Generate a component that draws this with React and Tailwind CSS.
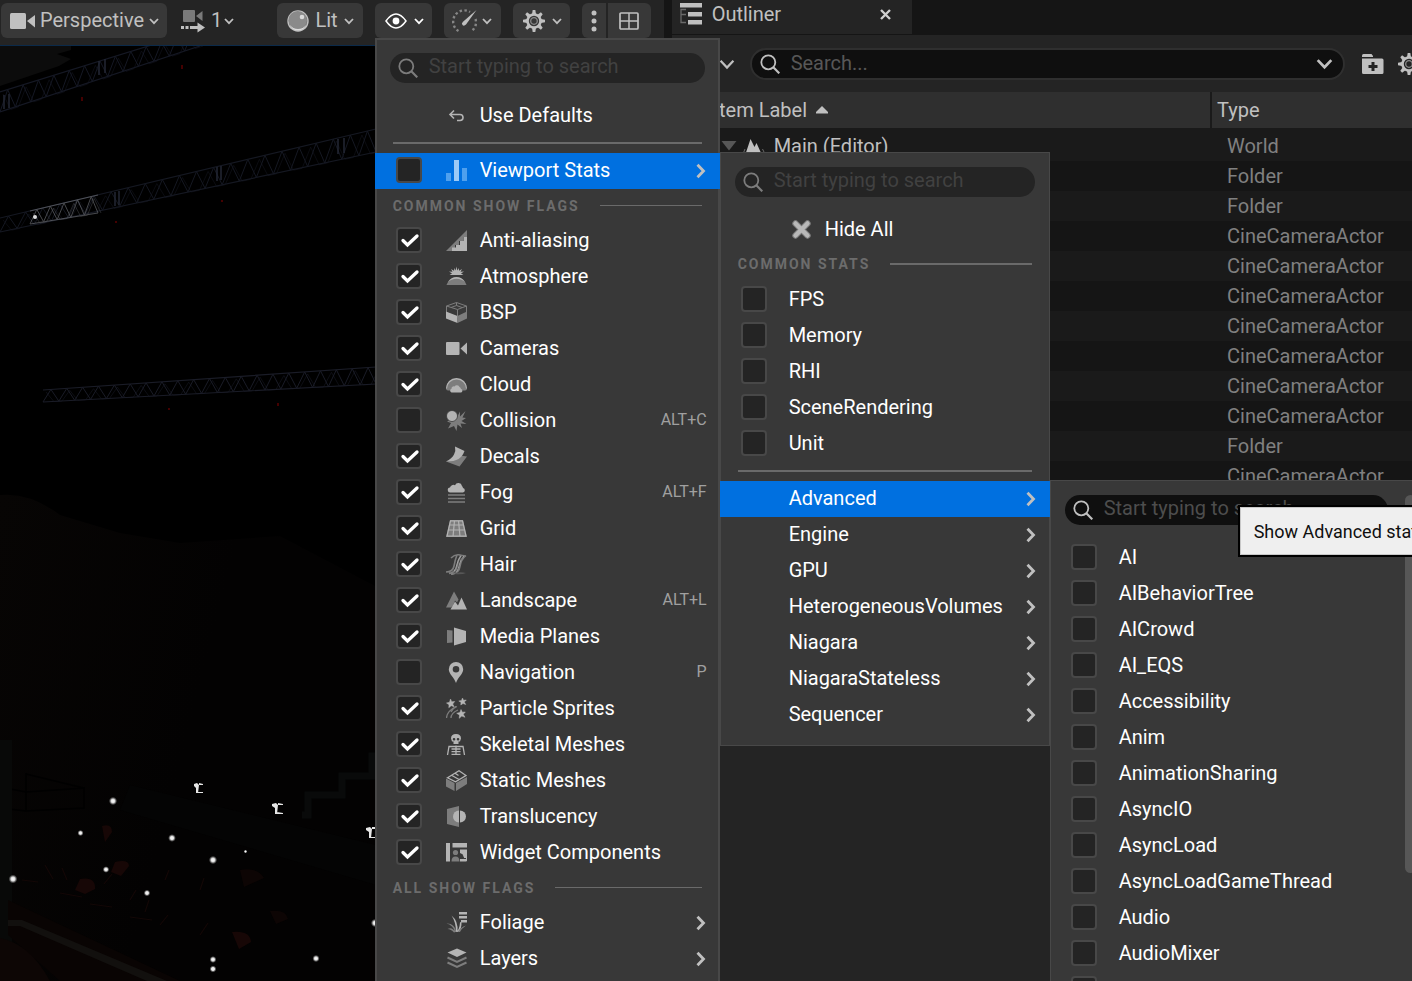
import React from "react";

const L = "#b4b4b4";
const D = "#7d7d7d";

function Icon({ size = 21, children, className = "" }) {
  return (
    <svg width={size} height={size} viewBox="0 0 21 21" className={"shrink-0 " + className} aria-hidden="true">
      {children}
    </svg>
  );
}

const icons = {
  defaults: (
    <Icon>
      <path d="M8 5.500 4 9.500l4 4M4.500 9.500H14a3 3 0 0 1 0 6h-3" fill="none" stroke={L} strokeWidth="1.600" />
    </Icon>
  ),
  stats: (
    <Icon>
      <path d="M0 13h5v8H0zM16 8h5v13h-5z" fill="#4fa0ee" />
      <path d="M8 0h5v21H8z" fill="#9ccaf7" />
    </Icon>
  ),
  antiAliasing: (
    <Icon>
      <path d="M0 21 21 0v7h-4v4h-4v4H9v3H6v3z" fill={D} />
      <path d="M21 7v14H6v-3.500h4V15h4v-4h3.500V7z" fill={L} />
    </Icon>
  ),
  atmosphere: (
    <Icon>
      <path d="M3.500 9 6 7.500 3 5.500l3.500.3L5 3l3 1.800L8.500 2l1.200 2.500L10.500.5l.8 4L12.800 2l.2 2.800L16 3l-1.500 2.800 3.500-.3L15 7.500 17.500 9z" fill={L} />
      <path d="M.5 19C2 14.500 6 12 10.500 12s8.500 2.500 10 7z" fill={D} />
      <path d="M1.500 16.500C4 12.500 7 11 10.500 11s6.500 1.500 9 5.500C17 14 14 12.800 10.500 12.800S4 14 1.500 16.500z" fill={L} />
    </Icon>
  ),
  bsp: (
    <Icon>
      <path d="m.5 4 10-3.500 10 3.500v7l-9 4-11-4z" fill="#3a3a3a" stroke={D} />
      <path d="m.5 4 11 3.500 9-3.500M11.500 7.500V14M10.500.5v3L5 5.500M10.500 3.500 16 5.500" fill="none" stroke={D} />
      <path d="M0 9.500 11.500 14v7L0 16.500z" fill={L} />
      <path d="M21 9.500 11.500 14v7L21 16.500z" fill={D} />
    </Icon>
  ),
  cameras: (
    <Icon>
      <rect x="0" y="4" width="13.500" height="13" rx="1" fill={L} />
      <path d="M21 4.500v12l-6.500-6z" fill={L} />
    </Icon>
  ),
  cloud: (
    <Icon>
      <path d="M0 14.500a10.500 10 0 0 1 21 0q0 2-2 2H2q-2 0-2-2z" fill={D} />
      <path d="M0 14.500a10.500 10.500 0 0 1 21 0h-1a9.500 9 0 0 0-19 0z" fill={L} />
      <path d="M5.500 18.500a2 2 0 0 1 0-3.800 2.200 2.200 0 0 1 3-2.200 2.800 2.800 0 0 1 5 .5 2.500 2.500 0 0 1 1.500 2 1.800 1.800 0 0 1 0 3.500z" fill={L} />
    </Icon>
  ),
  collision: (
    <Icon>
      <path d="m11 7 3-5.500 0 5L19.500 1 16.500 7.500l3.500.5-4.500 3 5 3-6-.5 1.500 4.500-4.500-3.500-1 6.500-2.500-5L2 18.500 5 13l-4-1.500z" fill={D} />
      <circle cx="6" cy="6" r="5.500" fill={L} stroke="#383838" strokeWidth=".8" />
    </Icon>
  ),
  decals: (
    <Icon>
      <path d="M0 15.500 8 14q5-2 6.500-4.500l6.500 1-7.500 10z" fill={D} />
      <path d="M9 .5 18.500 5q-2 5.500-6 8T0 15.500q6-3 8-7t1-8z" fill={L} />
    </Icon>
  ),
  fog: (
    <Icon>
      <path d="M4.500 10.500a2.500 2.500 0 0 1-.5-5 3.400 3.400 0 0 1 5-2.200 3.700 3.700 0 0 1 7 .7 3 3 0 0 1 1 2 2.300 2.300 0 0 1 0 4.500z" fill={L} />
      <path d="M2 13h17M2 16.500h17M2 20h17" stroke={D} strokeWidth="1.600" />
    </Icon>
  ),
  grid: (
    <Icon>
      <path d="M4 2h13l4 17H0z" fill={D} />
      <path d="M4.500 2.800h12L20 18.200H1zM3.500 7h14M2.500 12h16.500M8.500 2.500l-1.500 16M12.500 2.500l1.500 16" fill="none" stroke={L} strokeWidth="1.200" />
    </Icon>
  ),
  hair: (
    <Icon>
      <path d="M0 18q7 0 8-6T11 1M3 19.500q7-1 8-7T15 1M5 20.500q8-1 9-8T20 1.500M5 4Q9 0 14 1t6 1" fill="none" stroke={D} strokeWidth="1.600" />
      <path d="M8 17q2-2 3-7t4-8M10.500 18q2-3 3-8t4.500-8" fill="none" stroke={L} strokeWidth=".8" />
      <path d="M8 20q5-3 12-1-4 2-12 1z" fill="#575757" />
    </Icon>
  ),
  landscape: (
    <Icon>
      <path d="m0 17.500 8-16 4.500 8-1.500 3-2-2-2 5-2 2z" fill={D} />
      <path d="m4.500 19.500 4.500-8 3 4 3.500-8 5.500 12z" fill={L} />
    </Icon>
  ),
  media: (
    <Icon>
      <path d="m1 4 5.500.5v12L1 17z" fill={D} />
      <path d="m8 1.500 12 3.500v11L8 19.500z" fill={L} />
    </Icon>
  ),
  navigation: (
    <Icon>
      <path fillRule="evenodd" d="M10 0a7.200 7.200 0 0 1 7.200 7.200C17.200 12 12 15 10 21 8 15 2.800 12 2.800 7.200A7.200 7.200 0 0 1 10 0zm0 4a3.300 3.300 0 1 0 0 6.600A3.300 3.300 0 0 0 10 4z" fill={L} />
    </Icon>
  ),
  particles: (
    <Icon>
      <path d="m4.500 1 1.200 2.800 3-.3-2 2.500 1.500 2.700-3-1-2.400 2 .2-3L.5 5l3-.8zM16.500 0l1 2.300 2.800-.3-2 2 1.400 2.500-2.700-1L14.800 7l.2-2.700L12.800 3l2.700-.6zM15 11.500l1.300 2.700 3-.2-2 2.300 1.700 3-3.200-1.200-2.600 2.200.3-3.300-2.800-1.700 3.200-.8z" fill={L} stroke={L} strokeWidth=".5" />
      <path d="M.5 20Q1 13 10 8.500M5 20q0-5 7-8M5 14q2-4 6-5.500" fill="none" stroke={D} strokeWidth="1.300" />
    </Icon>
  ),
  skeletal: (
    <Icon>
      <path fillRule="evenodd" d="M10 0q5 0 5 4.500L14 7.500h-1.500V10h-5V7.500H6L5 4.500Q5 0 10 0zM8 4a1.300 1.300 0 1 0 .1 2.600A1.300 1.300 0 0 0 8 4zm4 0a1.300 1.300 0 1 0 .1 2.600A1.300 1.300 0 0 0 12 4z" fill={L} />
      <path d="M1.500 21 3 12.500h14l1.500 8.500M10 11.500V21M5.500 15h9M5.500 17.700h9M5.500 20.300h9" fill="none" stroke={L} strokeWidth="1.300" />
    </Icon>
  ),
  staticMesh: (
    <Icon>
      <path d="M0 8.500 8.500 13v8L0 16.500z" fill={D} />
      <path d="M10 13 21 7v7l-11 7z" fill={D} />
      <path d="M1.500 7.800 13 .8l7 4.700-10.500 6.300zM5.500 5.200 13 9.500M9 3.200l3.500 2.300" fill="none" stroke={L} strokeWidth="1.300" />
    </Icon>
  ),
  translucency: (
    <Icon>
      <path d="M1 3 13 0v21L1 18z" fill={D} />
      <path d="M13 4.500a6 6 0 0 0 0 12z" fill={L} />
      <path d="M14 4.500a6 6 0 0 1 0 12z" fill={L} />
    </Icon>
  ),
  widgets: (
    <Icon>
      <path d="M0 1h4v18.500H0zM6.500 1H21v4.500H6.500zM14 7.500h7V19h-2l-3-7-2-1z" fill={L} />
      <path d="M14 12.500q3-1 3 2t3 2M14 18.500h6" fill="none" stroke="#383838" strokeWidth="1" />
      <path d="M14 17h6.500v2.500H14z" fill={L} />
      <circle cx="9.500" cy="10.500" r="2.600" fill={D} />
      <path d="M5.500 19.500q0-5 4-5t4 5z" fill={D} />
    </Icon>
  ),
  foliage: (
    <Icon>
      <path d="M13 0h8v2.500h-8zM13 4h8v2.500h-8zM15 8h6v2.500h-6z" fill={L} />
      <path d="M10 20Q10 10 5.500 3.500 12.500 9 11.500 20zM10 20Q13.500 18 14 10.500l1.500-1q.5 8.500-4 10.500z" fill={L} />
      <path d="M9 20Q7 13 .5 11.500 8.500 11 10.500 20zM8 20.500q-3-3.500-6.500-3.500Q6 14.500 9.500 20zM11.500 20q3-5 8.500-6.500-4.500 3-6 6.500z" fill={D} />
    </Icon>
  ),
  layers: (
    <Icon>
      <path d="m1.500 4.500 9.500-4 9.500 4-9.500 4.500z" fill={L} />
      <path d="m1.500 9.500 9.500 4.500 9.500-4.500M1.500 14.500l9.500 4.500 9.500-4.500" fill="none" stroke={D} strokeWidth="2" />
    </Icon>
  ),
  hideAll: (
    <Icon>
      <path d="m4.500 4.500 12 12m0-12-12 12" stroke="#777" strokeWidth="6.500" strokeLinecap="round" />
      <path d="m4.500 4.500 12 12m0-12-12 12" stroke="#b8b8b8" strokeWidth="4.500" strokeLinecap="round" />
    </Icon>
  ),
};

function Gear({ color = "#c0c0c0" }) {
  return (
    <svg width="22" height="22" viewBox="-11 -11 22 22" className="shrink-0" aria-hidden="true">
      {[0, 45, 90, 135, 180, 225, 270, 315].map((a) => (
        <path key={a} d="M-2-7-1.300-11h2.600L2-7z" fill={color} transform={`rotate(${a})`} />
      ))}
      <circle r="6.500" fill="none" stroke={color} strokeWidth="2.600" />
      <circle r="3.300" fill="none" stroke="#8a8a8a" strokeWidth="1.300" />
    </svg>
  );
}

function Chevron({ color = "#c0c0c0", size = 10, weight = 1.8 }) {
  return (
    <svg width={size} height={size} viewBox="0 0 10 10" className="shrink-0" aria-hidden="true">
      <path d="m1 3 4 4.200L9 3" fill="none" stroke={color} strokeWidth={weight} />
    </svg>
  );
}

function Arrow() {
  return (
    <svg width="10" height="16" viewBox="0 0 10 16" className="shrink-0" aria-hidden="true">
      <path d="m1.500 1.800 6 6.200-6 6.200" fill="none" stroke="#c0c0c0" strokeWidth="2.800" />
    </svg>
  );
}

function Magnifier({ color }) {
  return (
    <svg width="20" height="20" viewBox="0 0 20 20" className="shrink-0" aria-hidden="true">
      <circle cx="8.300" cy="8.300" r="7" fill="none" stroke={color} strokeWidth="1.800" />
      <path d="m13.300 13.300 6 6" stroke={color} strokeWidth="2.200" />
    </svg>
  );
}

function Check({ label, on }) {
  return (
    <span className="relative grid h-[26px] w-[26px] shrink-0 place-items-center">
      <input
        type="checkbox"
        aria-label={label}
        defaultChecked={on}
        className="peer h-[26px] w-[26px] appearance-none rounded-[4px] border-2 border-[#484848] bg-[#242424]"
      />
      <svg viewBox="0 0 26 26" className="pointer-events-none absolute inset-0 hidden peer-checked:block" aria-hidden="true">
        <path d="m7 13.500 4.500 4.500L21 9" fill="none" stroke="#fff" strokeWidth="3.300" strokeLinecap="round" />
      </svg>
    </span>
  );
}

function CheckRow({ label, icon, on, shortcut }) {
  return (
    <label className="flex h-9 items-center pr-[13px] pb-0.5 pl-[21px]">
      <Check label={label} on={on} />
      {icon ? <span className="mr-[13px] ml-6">{icon}</span> : <span className="w-[22px]" />}
      <span>{label}</span>
      {shortcut && <span className="ml-auto text-base text-[#a0a0a0]">{shortcut}</span>}
    </label>
  );
}

function ActionRow({ label, icon }) {
  return (
    <button type="button" className="flex h-9 w-full items-center gap-[13px] pb-0.5 pl-[71px] text-left">
      {icon}
      {label}
    </button>
  );
}

function SubRow({ label, icon, active }) {
  return (
    <button type="button" className={"flex h-9 w-full items-center justify-between pr-[14px] text-left " + (icon ? "pl-[71px] " : "pl-[69px] ") + (active ? "bg-[#0070e0]" : "")}>
      <span className="flex items-center gap-[13px] pb-0.5">
        {icon}
        {label}
      </span>
      <Arrow />
    </button>
  );
}

function MenuSearch({ lit }) {
  return (
    <label className={"mx-[15px] mb-[15px] flex h-[30px] items-center gap-[11px] rounded-full pr-3 pl-2 " + (lit ? "bg-[#0f0f0f]" : "bg-[#242424]")}>
      <Magnifier color={lit ? "#c0c0c0" : "#7c7c7c"} />
      <input
        type="text"
        aria-label="Start typing to search"
        placeholder="Start typing to search"
        className={"w-full min-w-0 bg-transparent pb-1 outline-none " + (lit ? "placeholder:text-[#4d4d4d]" : "placeholder:text-[#414141]")}
      />
    </label>
  );
}

function Heading({ children, thick }) {
  return (
    <div className={"flex h-[34px] items-center gap-5 px-[18px] " + (thick ? "pb-0.5" : "pb-px")}>
      <h2 className="text-sm font-bold tracking-[2px] whitespace-nowrap text-[#6c6c6c]">{children}</h2>
      <span className={"flex-1 bg-[#6a6a6a] " + (thick ? "h-0.5" : "h-px")} />
    </div>
  );
}

function Separator() {
  return (
    <div className="flex h-[19px] items-center px-[18px] pb-px">
      <hr className="h-0.5 w-full border-0 bg-[#6a6a6a]" />
    </div>
  );
}

const flags = [
  ["Anti-aliasing", "antiAliasing", true],
  ["Atmosphere", "atmosphere", true],
  ["BSP", "bsp", true],
  ["Cameras", "cameras", true],
  ["Cloud", "cloud", true],
  ["Collision", "collision", false, "ALT+C"],
  ["Decals", "decals", true],
  ["Fog", "fog", true, "ALT+F"],
  ["Grid", "grid", true],
  ["Hair", "hair", true],
  ["Landscape", "landscape", true, "ALT+L"],
  ["Media Planes", "media", true],
  ["Navigation", "navigation", false, "P"],
  ["Particle Sprites", "particles", true],
  ["Skeletal Meshes", "skeletal", true],
  ["Static Meshes", "staticMesh", true],
  ["Translucency", "translucency", true],
  ["Widget Components", "widgets", true],
];
const commonStats = ["FPS", "Memory", "RHI", "SceneRendering", "Unit"];
const groups = ["Engine", "GPU", "HeterogeneousVolumes", "Niagara", "NiagaraStateless", "Sequencer"];
const advanced = [
  "AI", "AIBehaviorTree", "AICrowd", "AI_EQS", "Accessibility", "Anim", "AnimationSharing",
  "AsyncIO", "AsyncLoad", "AsyncLoadGameThread", "Audio", "AudioMixer", "AudioThreadCommands",
];

function AdvancedMenu() {
  return (
    <div className="absolute -top-px left-full w-[366px] bg-[#383838] pt-[15px] shadow-[inset_0_0_0_1px_#484848]">
      <div className="flex gap-0.5">
        <div className="w-[353px]">
          <MenuSearch lit />
          {advanced.map((a) => (
            <CheckRow key={a} label={a} />
          ))}
        </div>
        <div className="h-[378px] w-[11px] rounded-md bg-[#575757]" />
      </div>
      <div role="tooltip" className="absolute top-[25px] left-[188px] border-2 border-black bg-[#efefef] px-3.5 pt-[13px] pb-[11px] text-lg leading-6 whitespace-nowrap text-[#0f0f0f] shadow-[inset_0_0_0_1px_#c8c8c8]">
        Show Advanced stats
      </div>
    </div>
  );
}

function StatsMenu() {
  return (
    <div className="absolute -top-px left-full w-[330px] bg-[#383838] pt-[15px] pb-[13px] shadow-[inset_0_0_0_1px_#484848]">
      <MenuSearch />
      <ActionRow label="Hide All" icon={icons.hideAll} />
      <Heading thick>COMMON STATS</Heading>
      {commonStats.map((s) => (
        <CheckRow key={s} label={s} />
      ))}
      <Separator />
      <div className="relative">
        <SubRow label="Advanced" active />
        <AdvancedMenu />
      </div>
      {groups.map((g) => (
        <SubRow key={g} label={g} />
      ))}
    </div>
  );
}

function ShowMenu() {
  return (
    <div className="absolute top-full left-0 w-[345px] bg-[#383838] pt-[15px] pb-9 text-white shadow-[inset_0_0_0_2px_#484848]">
      <MenuSearch />
      <ActionRow label="Use Defaults" icon={icons.defaults} />
      <Separator />
      <div className="relative">
        <div className="flex h-9 items-center bg-[#0070e0] pr-[14px] pl-[21px]">
          <span className="pb-0.5">
            <Check label="Viewport Stats" />
          </span>
          <button type="button" className="ml-6 flex h-9 flex-1 items-center justify-between text-left">
            <span className="flex items-center gap-[13px] pb-0.5">
              {icons.stats}
              Viewport Stats
            </span>
            <Arrow />
          </button>
        </div>
        <StatsMenu />
      </div>
      <Heading>COMMON SHOW FLAGS</Heading>
      {flags.map(([label, icon, on, shortcut]) => (
        <CheckRow key={label} label={label} icon={icons[icon]} on={on} shortcut={shortcut} />
      ))}
      <Heading>ALL SHOW FLAGS</Heading>
      <SubRow label="Foliage" icon={icons.foliage} />
      <SubRow label="Layers" icon={icons.layers} />
    </div>
  );
}

const tool = "flex h-[35px] items-center bg-[#383838] text-[#c0c0c0] ";

function Toolbar() {
  return (
    <div className="relative z-10 flex h-[46px] items-start border-b border-[#0b2a4a] bg-[#242424] pt-[3px] pr-[13px] pl-px">
      <button type="button" className={tool + "gap-[5px] rounded-md pr-2 pl-[9px]"}>
        <svg width="25" height="16" viewBox="0 0 25 16" className="shrink-0" aria-hidden="true">
          <rect width="16" height="16" rx="1.500" fill="#c0c0c0" />
          <path d="M25 2v12.500L17 8z" fill="#c0c0c0" />
        </svg>
        <span className="pb-0.5">Perspective</span>
        <Chevron />
      </button>
      <button type="button" aria-label="Camera speed 1" className="ml-[14px] flex h-[35px] items-center text-[#c0c0c0]">
        <svg width="25" height="24" viewBox="0 0 25 24" className="mr-[5px] shrink-0" aria-hidden="true">
          <rect x="2" y="1" width="12" height="12" rx="1" fill="#7a7a7a" />
          <path d="M21.500 2v10L15 7z" fill="#7a7a7a" />
          <path d="M0 18.500h3M4.500 18.500h3M9 18.500h9" stroke="#c0c0c0" strokeWidth="3" />
          <path d="m16.500 13.500 7.500 5-7.500 5z" fill="#c0c0c0" />
        </svg>
        <span className="mr-0.5 pb-0.5">1</span>
        <Chevron />
      </button>
      <div className="ml-auto flex gap-3">
        <button type="button" className={tool + "gap-1.5 rounded-md pr-[9px] pl-2.5"}>
          <svg width="22" height="22" viewBox="0 0 22 22" className="shrink-0" aria-hidden="true">
            <circle cx="11" cy="11" r="10.700" fill="#c0c0c0" />
            <circle cx="11" cy="11" r="9.300" fill="#6f6f6f" />
            <circle cx="10.700" cy="10.200" r="9.200" fill="#8a8a8a" />
            <path d="M2.500 14.500Q6 19 11 19t8.500-4.500Q17 20.500 11 20.500T2.500 14.500z" fill="#dcdcdc" />
            <circle cx="15" cy="7" r="2.300" fill="#d8d8d8" />
          </svg>
          <span className="pb-0.5">Lit</span>
          <Chevron />
        </button>
        <div className="relative">
          <button type="button" aria-label="Show flags" className={tool + "w-[57px] gap-[7px] rounded-md pl-2.5"}>
            <svg width="22" height="16" viewBox="0 0 22 16" className="shrink-0" aria-hidden="true">
              <path d="M1 8q10-14 20 0-10 14-20 0z" fill="none" stroke="#fff" strokeWidth="1.500" />
              <circle cx="11" cy="8" r="3.400" fill="#fff" />
            </svg>
            <Chevron color="#fff" />
          </button>
          <ShowMenu />
        </div>
        <button type="button" aria-label="Performance" className={tool + "w-[57px] gap-[5px] rounded-md pl-2"}>
          <svg width="25" height="24" viewBox="0 0 25 24" className="shrink-0" aria-hidden="true">
            <path d="M6.500 22A10.500 10.500 0 1 1 18 3" fill="none" stroke="#868686" strokeWidth="2.400" strokeDasharray="2.400 2.400" />
            <path d="M23.500 10a10.500 10.500 0 0 1-4 12" fill="none" stroke="#868686" strokeWidth="2.400" strokeDasharray="2.400 2.400" />
            <path d="M24.500 1 14 15.500q-2 2-3.500.5t.5-3.300z" fill="#c0c0c0" />
          </svg>
          <Chevron />
        </button>
        <button type="button" aria-label="Settings" className={tool + "w-[57px] gap-[7px] rounded-md pl-2.5"}>
          <Gear />
          <Chevron />
        </button>
        <div className="flex gap-0.5">
          <button type="button" aria-label="More" className={tool + "w-6 justify-center rounded-l-md"}>
            <svg width="6" height="22" viewBox="0 0 6 22" aria-hidden="true">
              <circle cx="3" cy="3" r="2.500" fill="#c0c0c0" />
              <circle cx="3" cy="11" r="2.500" fill="#c0c0c0" />
              <circle cx="3" cy="19" r="2.500" fill="#c0c0c0" />
            </svg>
          </button>
          <button type="button" aria-label="Viewport layout" className={tool + "w-[43px] justify-center rounded-r-md"}>
            <svg width="20" height="18" viewBox="0 0 20 18" aria-hidden="true">
              <rect x="1" y="1" width="18" height="16" rx="1" fill="none" stroke="#c0c0c0" strokeWidth="1.700" />
              <path d="M10 1v16M1 9h18" stroke="#c0c0c0" strokeWidth="1.500" />
            </svg>
          </button>
        </div>
      </div>
    </div>
  );
}

function Truss({ from, to, parts, color, opacity = 1 }) {
  const [x1, t1, b1] = from;
  const [x2, t2, b2] = to;
  const at = (i) => {
    const f = i / parts;
    return [x1 + (x2 - x1) * f, t1 + (t2 - t1) * f, b1 + (b2 - b1) * f];
  };
  let zig = "";
  let zag = "";
  for (let i = 0; i <= parts; i++) {
    const [x, t, b] = at(i);
    zig += `${i ? "L" : "M"}${x} ${i % 2 ? t : b}`;
    zag += `${i ? "L" : "M"}${x + 3} ${i % 3 ? b : t + 2}`;
  }
  return (
    <g fill="none" stroke={color} opacity={opacity}>
      <path d={`M${x1} ${t1}L${x2} ${t2}M${x1} ${b1}L${x2} ${b2}`} strokeWidth="1.200" />
      <path d={zig} />
      <path d={zag} opacity=".5" />
    </g>
  );
}

const sparks = [
  [113, 801, 3], [80.500, 833, 2.200], [172, 838, 2.800], [213, 860, 3], [106, 869.500, 2.400], [13, 879, 3.200],
  [147, 893, 2.400], [245.500, 851.500, 1.300], [213, 959.500, 2.500], [213, 969, 2.500], [316, 958.500, 2.600], [375, 923, 3],
];

function Scene() {
  return (
    <svg className="min-h-0 w-full flex-1 bg-black" aria-hidden="true">
      <defs>
        <radialGradient id="spark">
          <stop offset="0" stopColor="#fff" />
          <stop offset=".45" stopColor="#ddd" />
          <stop offset="1" stopColor="#888" stopOpacity="0" />
        </radialGradient>
        <linearGradient id="rock" x1="0" y1="0" x2=".6" y2=".2">
          <stop offset="0" stopColor="#070504" />
          <stop offset="1" stopColor="#030202" />
        </linearGradient>
      </defs>
      <g transform="translate(0 -46)">
        <path d="M0 46h71v4l-14 4 14 5-12 7L0 86z" fill="#0c0c0c" />
        <path d="M0 495q30-3 60 20l60 18 60 10 100-7 95 50v395H0z" fill="url(#rock)" />
        <Truss from={[0, 92, 112]} to={[200, 30, 46]} parts={26} color="#151824" />
        <Truss from={[0, 218, 232]} to={[376, 129, 152]} parts={44} color="#151822" />
        <Truss from={[30, 211, 224]} to={[98, 195, 213]} parts={10} color="#77797f" opacity={0.6} />
        <circle cx="35" cy="217" r="2" fill="#ddd" />
        <Truss from={[43, 390, 402]} to={[376, 367, 384]} parts={42} color="#1a1c27" />
        <path d="M4 95v14M9 94v14M99 61v14M105 59v14M115 192v14M119 191v14M217 167v14M221 166v14M338 139v15M344 138v15" stroke="#232735" strokeWidth="1.500" />
        <path d="M182 65v4M82 97v4M222 200v2M116 221v2M169 408v2M278 403v3" stroke="#8a0000" strokeWidth="1" />
        <path d="M302 815h6v-20h34v-19h30v-20h8" fill="none" stroke="#090a0a" strokeWidth="7" />
        <path d="M130 785 376 845v40L120 810z" fill="#040404" />
        <path d="M0 787 26 792l59-4M26 773v38l58-3v-20l-58-14M0 808l26 3" fill="none" stroke="#000" strokeWidth="1.500" />
        <path d="M0 740h12v241H0z" fill="#080908" />
        <path d="M8 900 180 981H60L8 935z" fill="#090403" />
        <path d="M8 920h14l145 61h-20L20 926H8z" fill="#12100e" />
        <path d="M0 938q30 6 50 43H0z" fill="#0d0605" />
        <g fill="#170706">
          <path d="M102 826q10-3 10 6l-7 10zM115 862q14-3 14 4l-8 10-10-4zM80 879q16-3 15 10l-10 5-10-4zM232 932q18-2 19 10l-12 7z" />
          <path d="M240 870q18-3 24 8l-20 9zM270 911q16-2 18 8l-12 5z" opacity=".5" />
        </g>
        <g fill="none" stroke="#130706" strokeWidth="1.200">
          <path d="M45 865l8 14M62 868l5 12M104 884l8-10M130 900l6-10M145 912l4-12M165 880l4-10M200 890l4-12M200 935l8-12M160 925l8-10M22 880l16 2M60 893l22 4M90 904l22 3M130 917l22 3" />
        </g>
        <g fill="#e6e6e6">
          <path d="M194 784l3-1 2 2-1 8h-2v-5l-2-2zM199 783l4 1v1l-4 0zM198 792h5v1h-5z" />
          <path d="M272 804l4-1 2 2-1 9h-2v-6l-3-2zM278 803l5 1v1h-5zM277 812l6 1v1h-6z" />
          <path d="M366 828l4-1 2 2-1 9h-2v-6l-3-2zM372 827h4v2h-4zM371 837h5v1h-5z" />
        </g>
        {sparks.map(([x, y, r]) => (
          <circle key={x + "-" + y} cx={x} cy={y} r={r * 1.4} fill="url(#spark)" />
        ))}
      </g>
    </svg>
  );
}

const types = [
  "Folder", "Folder", "CineCameraActor", "CineCameraActor", "CineCameraActor", "CineCameraActor",
  "CineCameraActor", "CineCameraActor", "CineCameraActor", "Folder", "CineCameraActor",
];

function Outliner() {
  return (
    <section className="flex min-w-0 flex-1 flex-col bg-[#242424] text-[#c0c0c0]">
      <div className="flex h-[35px] bg-[#151515]">
        <div className="mb-px flex w-60 items-center bg-[#242424] pr-5 pb-1.5 pl-2">
          <svg width="22" height="22" viewBox="0 0 22 22" className="mr-2.5 shrink-0" aria-hidden="true">
            <path d="M0 0h22v4.500H0zM8 9h14v4.500H8zM8 17h14v4.500H8z" fill="#c0c0c0" />
            <path d="M6 6.500H1V19.500h5M1 11.500h5" fill="none" stroke="#6a6a6a" strokeWidth="1.300" />
          </svg>
          <h1>Outliner</h1>
          <button type="button" aria-label="Close tab" className="ml-auto">
            <svg width="13" height="13" viewBox="0 0 13 13" aria-hidden="true">
              <path d="m2 2 9 9m0-9-9 9" stroke="#d0d0d0" strokeWidth="2.400" />
            </svg>
          </button>
        </div>
      </div>
      <div className="flex h-[57px] items-center overflow-hidden pl-[47px]">
        <button type="button" aria-label="Filters" className="mr-[15px] shrink-0">
          <Chevron size={16} weight={1.4} />
        </button>
        <label className="flex h-8 min-w-0 flex-1 items-center gap-[11px] rounded-full border-2 border-[#2f2f2f] bg-[#0f0f0f] pr-2.5 pl-2">
          <Magnifier color="#c0c0c0" />
          <input
            type="text"
            aria-label="Search outliner"
            placeholder="Search..."
            className="w-full min-w-0 bg-transparent pb-0.5 outline-none placeholder:text-[#575757]"
          />
          <Chevron size={17} weight={1.6} />
        </label>
        <button type="button" aria-label="New folder" className="ml-[17px] shrink-0">
          <svg width="22" height="20" viewBox="0 0 22 20" aria-hidden="true">
            <path d="M0 3V1.500Q0 0 1.500 0h8L11 2v1z" fill="#c0c0c0" />
            <path fillRule="evenodd" d="M0 4.500h20q1.500 0 1.500 1.500v12.500q0 1.500-1.500 1.500H1.500Q0 20 0 18.500zM9.500 8v3h-3v3h3v3h3v-3h3v-3h-3V8z" fill="#c0c0c0" />
          </svg>
        </button>
        <button type="button" aria-label="Outliner settings" className="-mr-2 ml-3.5 shrink-0">
          <Gear />
        </button>
      </div>
      <table className="w-full table-fixed border-collapse text-left">
        <thead>
          <tr className="h-9 bg-[#2f2f2f]">
            <th scope="col" className="border-r-2 border-[#1a1a1a] pl-[42px] font-normal">
              <span className="flex items-center gap-[9px]">
                Item Label
                <svg width="12" height="8" viewBox="0 0 12 8" aria-hidden="true">
                  <path d="M6 0 12 6v1.500H0V6z" fill="#c0c0c0" />
                </svg>
              </span>
            </th>
            <th scope="col" className="w-[201px] pl-[5px] font-normal">Type</th>
          </tr>
        </thead>
        <tbody>
          <tr className="h-[33px] bg-[#1a1a1a]">
            <td className="pt-[3px] pl-[49px]">
              <span className="flex items-center">
                <svg width="16" height="10" viewBox="0 0 16 10" className="mr-1.5 shrink-0" aria-hidden="true">
                  <path d="M.5 0h15L8 9.500z" fill="#575757" />
                </svg>
                <svg width="22" height="20" viewBox="0 0 22 20" className="mr-[9px] shrink-0" aria-hidden="true">
                  <path d="m2.500 18 5-15 4 8 2-4 5 11z" fill="#c0c0c0" />
                  <path d="m0 18 2-5M22 18l-2.500-5" stroke="#6a6a6a" />
                </svg>
                Main (Editor)
              </span>
            </td>
            <td className="pt-[3px] pl-4 text-[#808080]">World</td>
          </tr>
          {types.map((t, i) => (
            <tr key={i} className="h-[30px] odd:bg-[#1a1a1a] even:bg-[#151515]">
              <td />
              <td className="pl-4 text-[#808080]">{t}</td>
            </tr>
          ))}
        </tbody>
      </table>
    </section>
  );
}

export default function App() {
  return (
    <main className="flex h-screen gap-2 overflow-hidden bg-[#151515] font-[Roboto,sans-serif] text-[20px] leading-[24px]">
      <section className="relative z-10 flex w-[47%] shrink-0 flex-col">
        <Toolbar />
        <Scene />
      </section>
      <Outliner />
    </main>
  );
}
